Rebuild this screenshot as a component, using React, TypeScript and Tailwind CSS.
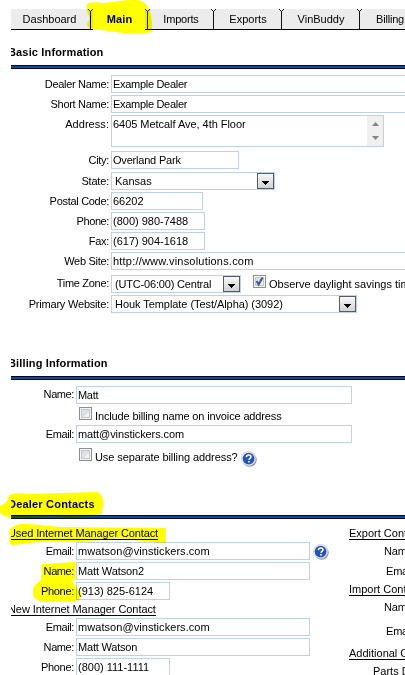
import type { ReactNode } from "react";

function Arrow() {
  return (
    <span className="flex h-4 w-[17px] items-center justify-center border border-[#555a66] bg-gradient-to-b from-[#f8f8f8] to-[#d2d2d2]">
      <svg width="7" height="4" viewBox="0 0 7 4" className="mt-[3px]" shapeRendering="crispEdges">
        <path d="M0 0h7v1H6v1H5v1H4v1H3V3H2V2H1V1H0z" fill="#000" />
      </svg>
    </span>
  );
}

function Box({ w, tracking = "", select = false, children }: { w: string; tracking?: string; select?: boolean; children: ReactNode }) {
  return (
    <div className={"flex h-[18px] shrink-0 items-center justify-between border border-[#bfd0ea] bg-white " + w + (select ? " pl-[3px]" : " pl-px")}>
      <span className={tracking}>{children}</span>
      {select && <Arrow />}
    </div>
  );
}

function Row({ label, labelW = "w-[98px]", pad = "pt-[3px]", tracking = "tracking-[-0.3px]", className = "", children }: { label: string; labelW?: string; pad?: string; tracking?: string; className?: string; children: ReactNode }) {
  return (
    <div className={"flex items-start " + className}>
      <div className={"mr-[2px] shrink-0 text-right " + pad + " " + labelW + " " + tracking}>{label}</div>
      {children}
    </div>
  );
}

function Check({ checked = false }: { checked?: boolean }) {
  return (
    <svg width="13" height="13" viewBox="0 0 13 13" className="shrink-0">
      <rect x=".5" y=".5" width="12" height="12" fill="#f5f5f5" stroke="#8b8f94" />
      <rect x="2.5" y="2.5" width="8" height="8" fill="#dfe2e5" stroke="#c3c7cc" />
      <path d="M5 10h5V5z" fill="#f3f4f5" />
      {checked && <path d="M3.5 6l2.2 3.6L9.5 2.6" fill="none" stroke="#41579b" strokeWidth="2" />}
    </svg>
  );
}

function Help() {
  return (
    <svg width="16" height="16" viewBox="0 0 16 16" className="shrink-0">
      <circle cx="8.6" cy="8.7" r="7.1" fill="#8a8e93" />
      <circle cx="7.6" cy="7.5" r="7.2" fill="#e8edf3" stroke="#c0c6cf" strokeWidth=".6" />
      <circle cx="7.6" cy="7.6" r="5.9" fill="#2452b8" />
      <path d="M5.4 6.1c.1-1.5 1-2.1 2.3-2.1 1.4 0 2.3.7 2.3 1.8 0 1.5-2 1.5-2 3" fill="none" stroke="#fff" strokeWidth="1.6" />
      <rect x="7.1" y="9.9" width="1.7" height="1.6" fill="#fff" />
    </svg>
  );
}

function Bar() {
  return <div className="h-1 border-y border-[#00051f] bg-[#104a9c]" />;
}

function Divider() {
  return (
    <svg width="5" height="20" viewBox="0 0 5 20" className="shrink-0" shapeRendering="crispEdges">
      <path d="M0 0h1v1H0zM4 0h1v1H4zM1 1h1v1H1zM3 1h1v1H3zM2 2h1v18H2z" fill="#111" />
      <path d="M1 0h3v1H1z" fill="#fff" />
    </svg>
  );
}

const tab = "flex h-5 shrink-0 items-center justify-center pt-px ";

export default function App() {
  return (
    <div className="relative h-[675px] w-[405px] overflow-hidden bg-white font-['Liberation_Sans',Arial,sans-serif] text-[11px] leading-[13px] whitespace-nowrap text-black">
      <div className="ml-[11px] h-[675px] w-[394px] overflow-hidden pt-[9px]">
        <nav className="flex h-[21px] border-b border-black bg-[#ececec]">
          <div className={tab + "w-[77px]"}>Dashboard</div>
          <Divider />
          <div className="-mb-px flex h-[21px] w-[52px] shrink-0 items-center justify-center bg-white pl-px font-bold tracking-[0.15px]">Main</div>
          <Divider />
          <div className={tab + "w-[61px] pl-px tracking-[-0.2px]"}>Imports</div>
          <Divider />
          <div className={tab + "w-[63px] pl-px"}>Exports</div>
          <Divider />
          <div className={tab + "w-[73px] pl-px"}>VinBuddy</div>
          <Divider />
          <div className={tab + "w-[56px] tracking-[-0.2px]"}>Billing</div>
        </nav>

        <h2 className="-ml-[3px] mt-4 h-[19px] font-bold tracking-[0.15px]">Basic Information</h2>
        <Bar />
        <div className="mt-[6px] flex flex-col gap-[2px]">
          <Row label="Dealer Name:"><Box w="w-[300px]" tracking="tracking-[-0.3px]">Example Dealer</Box></Row>
          <Row label="Short Name:"><Box w="w-[300px]" tracking="tracking-[-0.3px]">Example Dealer</Box></Row>
          <Row label="Address:" tracking="tracking-[0.05px]">
            <div className="flex h-8 w-[273px] justify-between border border-[#bfd0ea] pl-px">
              <span className="pt-[2px] tracking-[-0.04px]">6405 Metcalf Ave, 4th Floor</span>
              <span className="flex w-4 flex-col items-center justify-between bg-[#f0f0f0] py-[6px]">
                <svg width="7" height="4" viewBox="0 0 7 4"><path d="M0 4L3.5 0 7 4z" fill="#858585" /></svg>
                <svg width="7" height="4" viewBox="0 0 7 4"><path d="M0 0h7L3.5 4z" fill="#858585" /></svg>
              </span>
            </div>
          </Row>
          <Row label="City:" className="mt-[2px]"><Box w="w-32" tracking="tracking-[-0.2px]">Overland Park</Box></Row>
          <Row label="State:" className="mt-px" tracking="tracking-[-0.2px]"><Box w="w-[164px]" select>Kansas</Box></Row>
          <Row label="Postal Code:"><Box w="w-[92px]">66202</Box></Row>
          <Row label="Phone:" tracking="tracking-[-0.4px]"><Box w="w-[94px]">(800) 980-7488</Box></Row>
          <Row label="Fax:"><Box w="w-[94px]">(617) 904-1618</Box></Row>
          <Row label="Web Site:"><Box w="w-[300px]" tracking="tracking-[0.2px]">http://www.vinsolutions.com</Box></Row>
          <Row label="Time Zone:" className="mt-[3px]" pad="pt-[2px]">
            <Box w="w-[130px]" select tracking="tracking-[-0.18px]">(UTC-06:00) Central</Box>
            <div className="ml-3 flex"><Check checked /><span className="ml-[3px] pt-[3px]">Observe daylight savings time</span></div>
          </Row>
          <Row label="Primary Website:" tracking="tracking-[-0.2px]"><Box w="w-[246px]" select tracking="tracking-[-0.06px]">Houk Template (Test/Alpha) (3092)</Box></Row>
        </div>

        <h2 className="-ml-[3px] mt-11 h-[19px] font-bold tracking-[0.13px]">Billing Information</h2>
        <Bar />
        <div className="mt-[6px]">
          <Row label="Name:" labelW="w-[63px]" pad="pt-[2px]" tracking="tracking-[-0.4px]"><Box w="w-[276px]" tracking="tracking-[-0.3px]">Matt</Box></Row>
          <div className="ml-[68px] flex h-[21px] pt-[3px]"><Check /><span className="ml-[3px] pt-[3px] tracking-[-0.14px]">Include billing name on invoice address</span></div>
          <Row label="Email:" labelW="w-[63px]" tracking="tracking-[-0.4px]"><Box w="w-[276px]" tracking="tracking-[-0.08px]">matt@vinstickers.com</Box></Row>
          <div className="ml-[68px] flex h-[30px] pt-[5px]"><Check /><span className="ml-[3px] mr-[3px] pt-[3px] tracking-[-0.08px]">Use separate billing address?</span><span className="pt-[3px]"><Help /></span></div>
        </div>

        <h2 className="-ml-[3px] mt-[25px] h-[17px] font-bold tracking-[0.2px]">Dealer Contacts</h2>
        <Bar />
        <div className="flex items-start">
          <div className="w-[338px] shrink-0">
            <div className="-ml-[3px] h-[23px] pt-[8px] tracking-[-0.12px]"><span className="border-b border-black">Used Internet Manager Contact</span></div>
            <div className="flex flex-col gap-[2px]">
              <Row label="Email:" labelW="w-[63px]" tracking="tracking-[-0.4px]"><Box w="w-[234px]" tracking="tracking-[0.06px]">mwatson@vinstickers.com</Box><span className="ml-[3px] pt-[2px]"><Help /></span></Row>
              <Row label="Name:" labelW="w-[63px]" tracking="tracking-[-0.4px]"><Box w="w-[234px]" tracking="tracking-[-0.12px]">Matt Watson2</Box></Row>
              <Row label="Phone:" labelW="w-[63px]" tracking="tracking-[-0.3px]"><Box w="w-[94px]">(913) 825-6124</Box></Row>
            </div>
            <div className="-ml-[3px] h-[18px] pt-[3px] tracking-[-0.07px]"><span className="border-b border-black">New Internet Manager Contact</span></div>
            <div className="flex flex-col gap-[2px]">
              <Row label="Email:" labelW="w-[63px]" tracking="tracking-[-0.4px]"><Box w="w-[234px]" tracking="tracking-[0.06px]">mwatson@vinstickers.com</Box></Row>
              <Row label="Name:" labelW="w-[63px]" tracking="tracking-[-0.4px]"><Box w="w-[234px]" tracking="tracking-[-0.2px]">Matt Watson</Box></Row>
              <Row label="Phone:" labelW="w-[63px]" tracking="tracking-[-0.3px]"><Box w="w-[94px]">(800) 111-1111</Box></Row>
            </div>
          </div>
          <div className="shrink-0 pt-[8px]">
            <div className="h-[18px]"><span className="border-b border-black">Export Contact</span></div>
            <div className="h-5 pl-[35px] tracking-[-0.2px]">Name:</div>
            <div className="h-[18px] pl-[37px] tracking-[-0.2px]">Email:</div>
            <div className="h-[18px]"><span className="border-b border-black">Import Contact</span></div>
            <div className="h-6 pl-[35px] tracking-[-0.2px]">Name:</div>
            <div className="h-[22px] pl-[37px] tracking-[-0.2px]">Email:</div>
            <div className="h-[18px]"><span className="border-b border-black">Additional Contacts</span></div>
            <div className="pl-6">Parts Department:</div>
          </div>
        </div>
      </div>

      <svg width="405" height="675" viewBox="0 0 405 675" className="pointer-events-none absolute inset-0 mix-blend-multiply">
        <g fill="#ffff00">
          <path d="M87 4Q90 1 104 3L128 0H139Q147 3 149 9Q153 18 152 32Q142 34 122 33L96 29Q87 29 87 24L90 18Q85 10 87 4z" />
          <path d="M9 495Q16 492 28 494L97 492Q103 494 103 502L102 514Q80 518 55 516L8 517Q2 516 0 512V506Q8 503 9 495z" />
          <path d="M10 529Q16 523 29 524L60 527L166 528V543Q140 541 119 538L76 542Q45 540 23 544L12 545Q8 542 10 536z" />
          <path d="M42 564L75 562V579L72 581Q77 588 81 593Q82 600 75 601L46 602Q35 601 33 595Q31 586 41 580z" />
        </g>
      </svg>
    </div>
  );
}
